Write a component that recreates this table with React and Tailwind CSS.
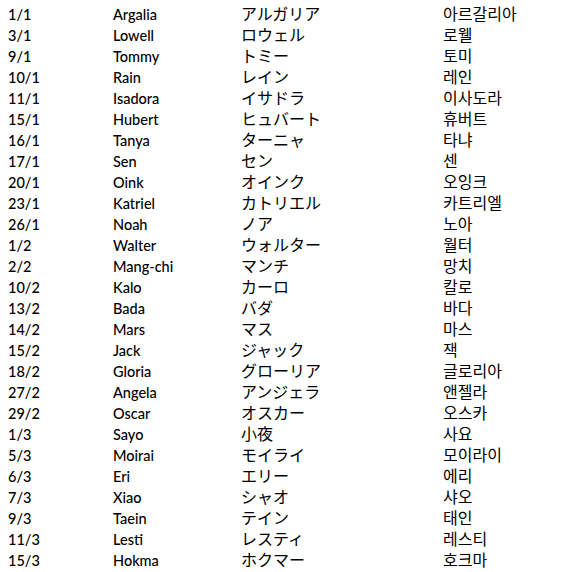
const rows = [
  ["1/1","Argalia","アルガリア","아르갈리아"],
  ["3/1","Lowell","ロウェル","로웰"],
  ["9/1","Tommy","トミー","토미"],
  ["10/1","Rain","レイン","레인"],
  ["11/1","Isadora","イサドラ","이사도라"],
  ["15/1","Hubert","ヒュバート","휴버트"],
  ["16/1","Tanya","ターニャ","타냐"],
  ["17/1","Sen","セン","센"],
  ["20/1","Oink","オインク","오잉크"],
  ["23/1","Katriel","カトリエル","카트리엘"],
  ["26/1","Noah","ノア","노아"],
  ["1/2","Walter","ウォルター","월터"],
  ["2/2","Mang-chi","マンチ","망치"],
  ["10/2","Kalo","カーロ","칼로"],
  ["13/2","Bada","バダ","바다"],
  ["14/2","Mars","マス","마스"],
  ["15/2","Jack","ジャック","잭"],
  ["18/2","Gloria","グローリア","글로리아"],
  ["27/2","Angela","アンジェラ","앤젤라"],
  ["29/2","Oscar","オスカー","오스카"],
  ["1/3","Sayo","小夜","사요"],
  ["5/3","Moirai","モイライ","모이라이"],
  ["6/3","Eri","エリー","에리"],
  ["7/3","Xiao","シャオ","샤오"],
  ["9/3","Taein","テイン","태인"],
  ["11/3","Lesti","レスティ","레스티"],
  ["15/3","Hokma","ホクマー","호크마"],
];

export default function App() {
  return (
    <div className="w-[574px] h-[572px] bg-white text-black pt-[4px] pl-[8px] overflow-hidden">
      {rows.map((r, i) => (
        <div key={i} className="grid grid-cols-[105px_128px_202px_1fr] h-[21px] items-center leading-none">
          <span className="text-[14.5px] font-medium font-['Lato',sans-serif] mt-[2px]">{r[0]}</span>
          <span className="text-[14.5px] font-medium font-['Lato',sans-serif] mt-[2px]">{r[1]}</span>
          <span className="text-[16px] font-normal font-['Noto_Sans_CJK_JP',sans-serif] mb-[4px]">{r[2]}</span>
          <span className="text-[16px] font-['Noto_Sans_CJK_KR',sans-serif] mb-[3px]">{r[3]}</span>
        </div>
      ))}
    </div>
  );
}
